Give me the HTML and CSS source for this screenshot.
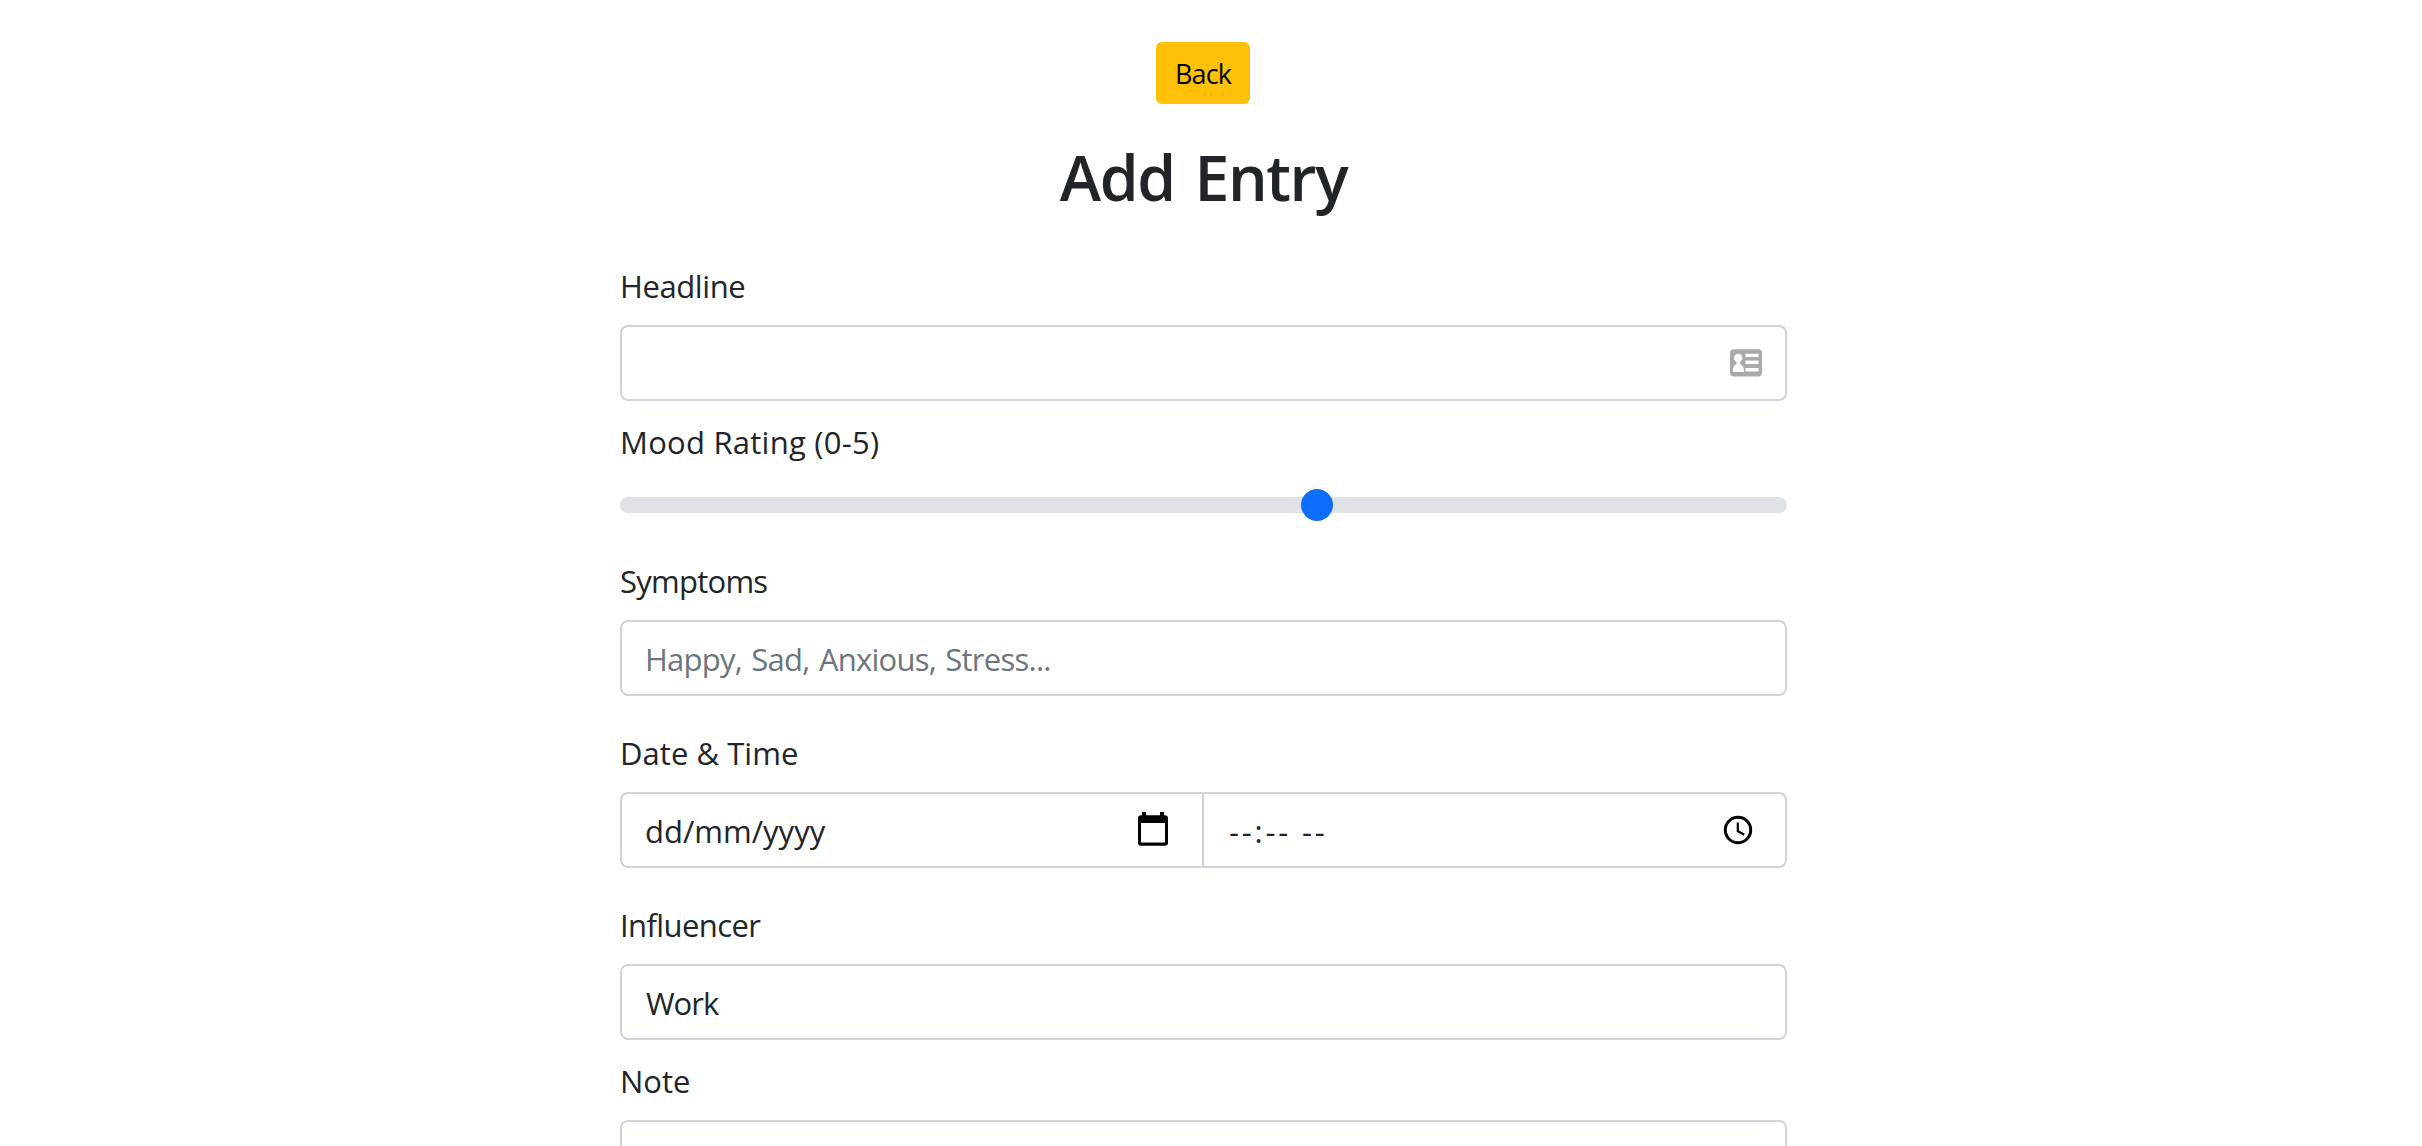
FILE: index.html
```html
<!DOCTYPE html>
<html lang="en">
<head>
<meta charset="utf-8">
<title>Add Entry</title>
<link rel="stylesheet" href="styles.css">
</head>
<body>
<main class="container">
  <header class="header">
    <button class="btn" type="button">Back</button>
    <h1 class="title">Add Entry</h1>
  </header>
  <form class="form">
    <div class="field">
      <label class="label label-headline">Headline</label>
      <div class="control">
        <svg class="icon-card" width="32" height="28" viewBox="0 0 32 28">
          <rect x="0" y="0.3" width="32" height="27.2" rx="4" fill="#a9a9a9"/>
          <circle cx="8.2" cy="9" r="4.2" fill="#fff"/>
          <path d="M6.5 11h3.6v4c2.600 1 3.900 3.500 3.900 8H2.700c0-4.500 1.200-7 3.800-8z" fill="#fff"/>
          <path d="M15.500 4.700h13v3.400h-13zM15.500 11.500h13v3.400h-13zM15.500 19h13v3.500h-13z" fill="#fff"/>
        </svg>
      </div>
    </div>
    <div class="field field-range">
      <label class="label label-mood">Mood Rating (0-5)</label>
      <input class="range" type="range" min="0" max="5" value="3">
    </div>
    <div class="field field-spaced">
      <label class="label label-symptoms">Symptoms</label>
      <input class="control control-symptoms" type="text" placeholder="Happy, Sad, Anxious, Stress...">
    </div>
    <div class="field field-spaced">
      <label class="label label-date">Date &amp; Time</label>
      <div class="group">
        <div class="control control-date">
          <span class="date-text">dd/mm/yyyy</span>
          <svg class="icon-calendar" width="30" height="34" viewBox="0 0 30 34">
            <path fill-rule="evenodd" d="M4 0h4v3.300h14V0h4v3.300h1a3 3 0 0 1 3 3v24.400a3 3 0 0 1-3 3H3a3 3 0 0 1-3-3V6.300a3 3 0 0 1 3-3h1zM3 11v19.500h24V11z"/>
          </svg>
        </div>
        <div class="control control-time">
          <span class="time-text">--:-- --</span>
          <svg class="icon-clock" width="30" height="30" viewBox="0 0 30 30" fill="none" stroke="#000">
            <circle cx="15" cy="15" r="12.700" stroke-width="3"/>
            <path d="M14.800 7.500v8.500l6.400 3.700" stroke-width="2.200"/>
          </svg>
        </div>
      </div>
    </div>
    <div class="field">
      <label class="label label-influencer">Influencer</label>
      <div class="control control-work">Work</div>
    </div>
    <div class="field">
      <label class="label label-note">Note</label>
      <textarea class="control control-note"></textarea>
    </div>
  </form>
</main>
</body>
</html>
```
FILE: styles.css
```css
* {
  box-sizing: border-box;
}

body {
  margin: 0;
  background: #fff;
  color: #212529;
  font: 400 31px/48px "Open Sans", "Noto Sans", sans-serif;
}

.container {
  width: 1167px;
  margin-left: 620px;
  padding-top: 42px;
}

.header {
  display: flex;
  flex-direction: column;
  align-items: center;
}

.btn {
  width: 94px;
  height: 62px;
  margin-right: 1px;
  padding: 1px 0 0;
  border: 0;
  border-radius: 6px;
  background: #ffc107;
  color: #000;
  font: inherit;
  font-size: 27px;
  line-height: 42px;
  letter-spacing: -0.900px;
}

.title {
  margin: 34px 0 45px;
  font-size: 62.500px;
  font-weight: 600;
  line-height: 78px;
  letter-spacing: -1.400px;
  word-spacing: 5px;
}

.form {
  display: flex;
  flex-direction: column;
  gap: 16px;
}

.field {
  display: flex;
  flex-direction: column;
  gap: 16px;
}

.field-spaced {
  margin-bottom: 16px;
}

.field-range {
  margin-bottom: 11px;
}

.label {
  height: 48px;
  padding-top: 1px;
}

.label-headline { letter-spacing: -0.400px; }
.label-mood { letter-spacing: 0.250px; }
.label-symptoms { letter-spacing: -0.750px; }
.label-date { letter-spacing: 0.050px; }
.label-influencer { letter-spacing: -0.600px; }
.label-note { letter-spacing: 0; }

.control {
  display: flex;
  align-items: center;
  width: 100%;
  height: 76px;
  padding: 2px 23px 0;
  border: 2px solid #ced4da;
  border-radius: 8px;
  background: #fff;
  color: #212529;
  font: inherit;
  outline: 0;
}

.icon-card {
  margin: -2px 0 0 auto;
}

.control-symptoms {
  letter-spacing: -0.750px;
  word-spacing: 2px;
}

.control-symptoms::placeholder {
  color: #6c757d;
  opacity: 1;
}

.range {
  width: 100%;
  height: 48px;
  margin: 0;
  background: transparent;
  appearance: none;
}

.range::-webkit-slider-runnable-track {
  height: 16px;
  border-radius: 8px;
  background: #dee2e6;
}

.range::-webkit-slider-thumb {
  width: 32px;
  height: 32px;
  margin-top: -8px;
  border: 0;
  border-radius: 50%;
  background: #0d6efd;
  appearance: none;
}

.group {
  display: flex;
}

.control-date {
  justify-content: space-between;
  width: 584px;
  padding-right: 34px;
  border-radius: 8px 0 0 8px;
  letter-spacing: 0;
}

.icon-calendar {
  margin-top: -4px;
}

.control-time {
  flex: 1;
  justify-content: space-between;
  margin-left: -2px;
  padding: 2px 32px 0 25px;
  border-radius: 0 8px 8px 0;
  letter-spacing: 2.800px;
}

.icon-clock {
  margin-top: -2px;
}

.control-work {
  letter-spacing: -1px;
  padding-left: 24px;
}

.control-note {
  height: 26px;
  padding: 0 23px;
  border-bottom: 0;
  border-radius: 8px 8px 0 0;
  resize: none;
}
```
